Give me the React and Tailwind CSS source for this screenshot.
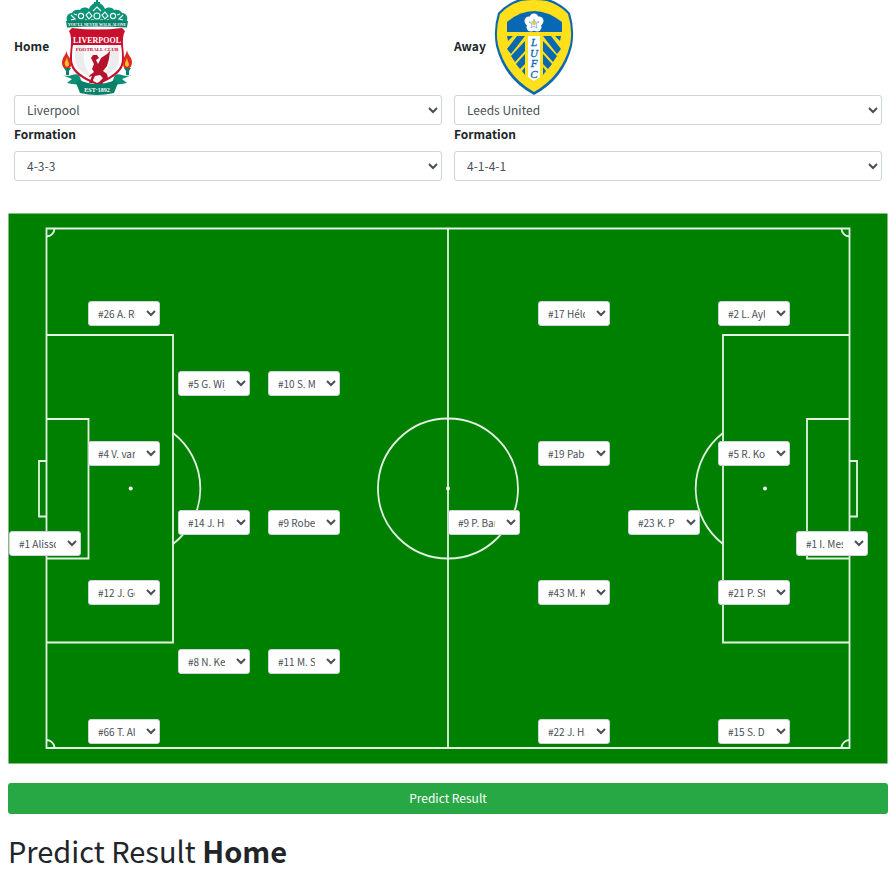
const FONT = "font-['Noto_Sans_CJK_JP','Source_Sans_Pro',sans-serif]";

function LiverpoolCrest() {
  return (
    <svg className="h-[95px] w-[95px]" viewBox="-12 0 95 95" role="img" aria-label="Liverpool crest">
      <path d="M35 0v9M32 3h6" stroke="#0b8f75" strokeWidth="2" />
      <path d="M6 22c-3-3-1-9 4-9 1-3 5-4 8-3 2-3 6-3 9-1 2-5 5-6 8-6s6 1 8 6c3-2 7-2 9 1 3-1 7 0 8 3 5 0 7 6 4 9z" fill="#0b9377" />
      <g fill="none" stroke="#fff" strokeWidth="1.1">
        <circle cx="35" cy="16" r="3" /><path d="M31 11l4-4 4 4M27 12l3 4-3 3-3-4zM43 12l3 4-3 3-3-4z" />
        <circle cx="19" cy="16" r="2.6" /><circle cx="51" cy="16" r="2.6" />
        <path d="M9 15l4 4-4 1M61 15l-4 4 4 1M12 14l3 1M58 14l-3 1M29 20h3M38 20h3M23 20h2M45 20h2" />
      </g>
      <path d="M4 21q31-2 62 0l-1 6.500q-30-2-60 0z" fill="#0b8068" />
      <path d="M9 28h52l3 3c-4 8 0 17 0 29 0 14-14 22-29 27-15-5-29-13-29-27 0-12 4-21 0-29z" fill="#fff" />
      <path d="M10 28q25 3 50 0l3 3c-4 8-1 17-1 28 0 14-13 20-27 26-14-6-27-12-27-26 0-11 3-20-1-28z" fill="#c8102e" />
      <path d="M11 45h48c1 5 1 10 1 14 0 12-12 18-25 24-13-6-25-12-25-24 0-4 0-9 1-14z" fill="#fff" />
      <path d="M14 45h42c1 5 1 10 1 14 0 11-11 16-22 21-11-5-22-10-22-21 0-4 0-9 1-14z" fill="#ececec" />
      <path d="M24 45h22c6 16 0 28-11 34-11-6-17-18-11-34z" fill="#fbfbfb" />
      <g textAnchor="middle" className="font-['Liberation_Serif',serif]" fontWeight="700">
        <text x="35" y="26" fontSize="4" fill="#fff">YOU'LL NEVER WALK ALONE</text>
        <text x="35" y="43" fontSize="8" fill="#fff">LIVERPOOL</text>
        <text x="35" y="51" fontSize="5" fill="#c8102e">FOOTBALL CLUB</text>
      </g>
      <path d="M29 58l2-3 4 0 2 3-3 2 2 4 3-6 6-4 3-3-1 8-2 7-4 5 4 3 1 4-4 4-2 1 3 2h-6l1-4 3-3-3-3-5 1-2 4 1 3h-5l3-7-3 1 1-2 4-3-2-3 2-5-1-2z" fill="#b5122b" />
      <path d="M0 75c8 3 13-3 17 0l4 10-11-1-5-1 5-4z M70 75c-8 3-13-3-17 0l-4 10 11-1 5-1-5-4z" fill="#0b8f75" />
      <path d="M17 80q18 8 36 0l3 3-4 10q-17 4-34 0l-4-10z" fill="#0b8068" />
      <text x="35" y="92" fontSize="6" fill="#fff" textAnchor="middle" className="font-['Liberation_Serif',serif]" fontWeight="700">EST·1892</text>
      <path d="M5 50c-1 5-5 7-5 13 0 3 2 6 5 6s5-3 4-7c0-5-5-6-4-12zM65 50c-1 6-4 7-4 13 0 3 1 6 4 6s5-3 5-7c0-5-4-6-5-12z" fill="#dc2b23" />
      <path d="M5 57c-1 4-3 5-2 8 1 3 4 2 4-1 0-2-2-4-2-7zM65 57c0 3-2 4-2 7s3 4 4 1c0-3-2-4-2-8z" fill="#fbbd27" />
      <path d="M2 68h7l-2 3v4H4v-4zM62 68h7l-2 3v4h-3v-4z" fill="#0b8068" />
    </svg>
  );
}

function LeedsCrest() {
  return (
    <svg className="h-[95px] w-[95px]" viewBox="-8 0 95 95" role="img" aria-label="Leeds United crest">
      <path d="M22 0H56Q67 4 75 13Q80 29 77 46Q69 79 39 95Q9 79 1 46Q-2 29 3 13Q11 4 22 0Z" fill="#0968b3" />
      <path d="M26 1Q39-1 52 1Q65 5 73 14Q78 30 75 45Q67 76 39 92Q11 76 3 45Q0 30 5 14Q13 5 26 1Z" fill="#ffe01b" />
      <path d="M12 32V22Q25 11 39 11T67 22V32Z" fill="#0968b3" />
      <g fill="#0968b3">
        <path d="M12 36h6l-5 5zM22 36h8L16 54l-4-5zM30 41v10L20 62l-4-6zM30 54v10l-5 5-4-5zM30 67v8l-3-4z" />
        <path d="M66 36h-6l5 5zM56 36h-8l14 18 4-5zM48 41v10l10 11 4-6zM48 54v10l5 5 4-5zM48 67v8l3-4z" />
      </g>
      <path d="M33 36h12v41l-6 4-6-4z" fill="#fff" />
      <g fill="#fff"><circle cx="39" cy="18" r="4.500" /><circle cx="44" cy="21" r="4.500" /><circle cx="42" cy="27" r="4.500" /><circle cx="36" cy="27" r="4.500" /><circle cx="34" cy="21" r="4.500" /></g>
      <path d="M39 19l1 3h4l-3 2 1 4-3-2-3 2 1-4-3-2h4z" fill="#fff" stroke="#83acd0" strokeWidth="0.8" />
      <circle cx="39" cy="23" r="2" fill="#d9cd4a" />
      <g textAnchor="middle" fill="#0968b3" fontSize="11" fontStyle="italic" className="font-['Liberation_Serif',serif]" stroke="#0968b3" strokeWidth="0.3">
        <text x="39" y="46">L</text><text x="39" y="57">U</text><text x="39" y="67">F</text><text x="39" y="78">C</text>
      </g>
    </svg>
  );
}

const PLAYERS = [
  ["#1 Alisson", 1, 318], ["#26 A. Robertson", 80, 88], ["#4 V. van Dijk", 80, 228],
  ["#12 J. Gomez", 80, 367], ["#66 T. Alexander-Arnold", 80, 506],
  ["#5 G. Wijnaldum", 170, 158], ["#14 J. Henderson", 170, 297], ["#8 N. Keita", 170, 436],
  ["#10 S. Mané", 260, 158], ["#9 Roberto Firmino", 260, 297], ["#11 M. Salah", 260, 436],
  ["#9 P. Bamford", 440, 297], ["#17 Hélder Costa", 530, 88], ["#19 Pablo Hernández", 530, 228],
  ["#43 M. Klich", 530, 367], ["#22 J. Harrison", 530, 506], ["#23 K. Phillips", 620, 297],
  ["#2 L. Ayling", 710, 88], ["#5 R. Koch", 710, 228], ["#21 P. Struijk", 710, 367],
  ["#15 S. Dallas", 710, 506], ["#1 I. Meslier", 788, 318],
];

function Team({ side, crest, teams, formations }) {
  const id = side.toLowerCase();
  const select = "block h-[30px] w-full rounded-[3px] border border-[#ced4da] bg-white pr-3 pb-px pl-2 text-[12px] text-[#495057]";
  return (
    <div>
      <div className="flex h-[95px] items-center gap-px">
        <label htmlFor={id + "-team"} className="pb-1 font-bold">{side}</label>
        {crest}
      </div>
      <select id={id + "-team"} className={select}>{teams.map((t) => <option key={t}>{t}</option>)}</select>
      <label htmlFor={id + "-formation"} className="mb-2 block leading-[18px] font-bold">Formation</label>
      <select id={id + "-formation"} className={select}>{formations.map((f) => <option key={f}>{f}</option>)}</select>
    </div>
  );
}

function Pitch() {
  return (
    <svg className="block h-full w-full" viewBox="0 0 880 551" aria-hidden="true">
      <rect x=".5" y=".5" width="879" height="550" fill="#008000" />
      <g fill="none" stroke="#e3f2e3" strokeWidth="1.800">
        <path d="M38.500 15.500H841.500V535H38.500ZM440 15.500V535" />
        <path d="M38.500 122H165V429.500H38.500M38.500 206H80.500V345.500H38.500M38.500 248H31V303.500H38.500" />
        <path d="M841.500 122H715V429.500H841.500M841.500 206H799V345.500H841.500M841.500 248H849V303.500H841.500" />
        <circle cx="440" cy="275.500" r="70" />
        <path d="M165 220A70 70 0 0 1 165 331M715 220A70 70 0 0 0 715 331" />
        <path d="M46.500 15.500A8 8 0 0 1 38.500 23.500M833.500 15.500A8 8 0 0 0 841.500 23.500M38.500 527A8 8 0 0 1 46.500 535M841.500 527A8 8 0 0 0 833.500 535" />
      </g>
      <g fill="#fff"><circle cx="122.700" cy="275.500" r="2" /><circle cx="440" cy="275.500" r="2" /><circle cx="757" cy="275.500" r="2" /></g>
    </svg>
  );
}

export default function App() {
  return (
    <main className={"bg-white pr-1 pl-2 text-[12px] text-[#212529] " + FONT}>
      <div className="grid grid-cols-2 gap-3 px-1.5">
        <Team side="Home" crest={<LiverpoolCrest />} teams={["Liverpool", "Leeds United"]} formations={["4-3-3", "4-1-4-1"]} />
        <Team side="Away" crest={<LeedsCrest />} teams={["Leeds United", "Liverpool"]} formations={["4-1-4-1", "4-3-3"]} />
      </div>
      <section aria-label="Line-ups" className="relative mt-8 aspect-[880/551]">
        <Pitch />
        {PLAYERS.map(([name, x, y]) => (
          <select
            key={name}
            aria-label={name}
            className="absolute h-[25px] w-[72px] rounded-[3px] border border-[#ced4da] bg-white pr-2 pl-[5px] text-[10px] text-[#495057]"
            style={{ left: (x / 880) * 100 + "%", top: (y / 551) * 100 + "%" }}
          >
            <option>{name}</option>
          </select>
        ))}
      </section>
      <button type="button" className="mt-[19px] block h-[31px] w-full rounded-[3px] bg-[#28a745] pb-0.5 text-[12px] text-white">Predict Result</button>
      <h2 className="mt-[18px] text-[29px] leading-9">Predict Result <b>Home</b></h2>
    </main>
  );
}
